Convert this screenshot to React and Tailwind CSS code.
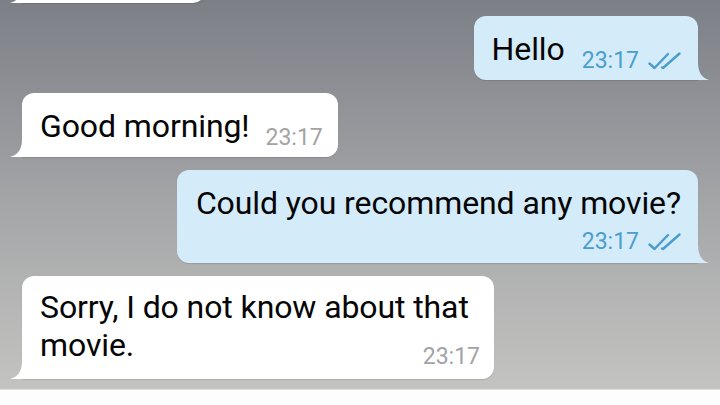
import React from "react";

function Tail({ side, color }) {
  if (side === "left") {
    return (
      <svg
        className="absolute bottom-0 left-[-12px]"
        width="13"
        height="18"
        viewBox="0 0 13 18"
      >
        <path d="M13 0 L12 0 Q12 15 0 18 L13 18 Z" fill={color} />
      </svg>
    );
  }
  return (
    <svg
      className="absolute bottom-0 right-[-11px]"
      width="12"
      height="18"
      viewBox="0 0 12 18"
    >
      <path d="M0 0 L1 0 Q1 15 12 18 L0 18 Z" fill={color} />
    </svg>
  );
}

function Checks() {
  return (
    <svg width="33" height="18" viewBox="0 0 33 18" className="shrink-0">
      <path
        d="M1.5 11.5 L6.5 16 L20 2"
        fill="none"
        stroke="#4b9dcc"
        strokeWidth="2.4"
        strokeLinecap="round"
        strokeLinejoin="round"
      />
      <path
        d="M14 15.5 L15 16 L31.5 1.5"
        fill="none"
        stroke="#4b9dcc"
        strokeWidth="2.4"
        strokeLinecap="round"
        strokeLinejoin="round"
      />
    </svg>
  );
}

const textCls = "text-[32px] leading-[38px] text-[#050505] whitespace-nowrap tracking-[-0.1px]";
const timeIn = "text-[23px] leading-[23px] text-[#a3a3a3]";
const timeOut = "text-[23px] leading-[23px] text-[#4b9dcc]";

export default function App() {
  return (
    <div
      className="w-[720px] h-[405px] overflow-hidden flex flex-col bg-gradient-to-b from-[#7d7f87] via-[#a4a5a7] to-[#c6c7c3]"
      style={{ fontFamily: "Roboto, 'Noto Sans', sans-serif" }}
    >
      <div className="h-[389px] flex flex-col gap-[13px]">
        {/* partially visible top incoming bubble */}
        <div className="relative ml-[22px] mt-[-47px] h-[50px] w-[183px] bg-white rounded-[12px] rounded-bl-none shadow-[0_1px_1px_rgba(0,0,0,0.12)]">
          <Tail side="left" color="#ffffff" />
        </div>

        {/* Hello */}
        <div className="relative self-end mr-[22px] flex items-end bg-[#d4ecfa] rounded-[12px] rounded-br-none pl-[18px] pr-[17px] pt-[14px] pb-[12px] shadow-[0_1px_1px_rgba(0,0,0,0.12)]">
          <span className={textCls}>Hello</span>
          <span className={`${timeOut} ml-[17px] mb-[-4px]`}>23:17</span>
          <span className="ml-[9px] mb-[-2px]">
            <Checks />
          </span>
          <Tail side="right" color="#d4ecfa" />
        </div>

        {/* Good morning */}
        <div className="relative self-start ml-[22px] flex items-end bg-white rounded-[12px] rounded-bl-none pl-[18px] pr-[15px] pt-[14px] pb-[12px] shadow-[0_1px_1px_rgba(0,0,0,0.12)]">
          <span className={textCls}>Good morning!</span>
          <span className={`${timeIn} ml-[16px] mb-[-4px]`}>23:17</span>
          <Tail side="left" color="#ffffff" />
        </div>

        {/* Could you */}
        <div className="relative self-end mr-[22px] flex flex-col bg-[#d4ecfa] rounded-[12px] rounded-br-none pl-[19px] pr-[17px] pt-[14px] pb-[10px] shadow-[0_1px_1px_rgba(0,0,0,0.12)]">
          <span className={textCls}>Could you recommend any movie?</span>
          <div className="mt-[8px] flex items-end justify-end">
            <span className={timeOut}>23:17</span>
            <span className="ml-[9px] mb-[2px]">
              <Checks />
            </span>
          </div>
          <Tail side="right" color="#d4ecfa" />
        </div>

        {/* Sorry */}
        <div className="relative self-start ml-[22px] w-[472px] flex flex-col bg-white rounded-[12px] rounded-bl-none pl-[18px] pr-[14px] pt-[12px] pb-[15px] shadow-[0_1px_1px_rgba(0,0,0,0.12)]">
          <span className={textCls}>Sorry, I do not know about that</span>
          <div className="flex items-end justify-between">
            <span className={textCls}>movie.</span>
            <span className={`${timeIn} mb-[-4px]`}>23:17</span>
          </div>
          <Tail side="left" color="#ffffff" />
        </div>
      </div>
      <div className="h-[1px] bg-[#dfe0dd]" />
      <div className="flex-1 bg-[#fdfdfd]" />
    </div>
  );
}
